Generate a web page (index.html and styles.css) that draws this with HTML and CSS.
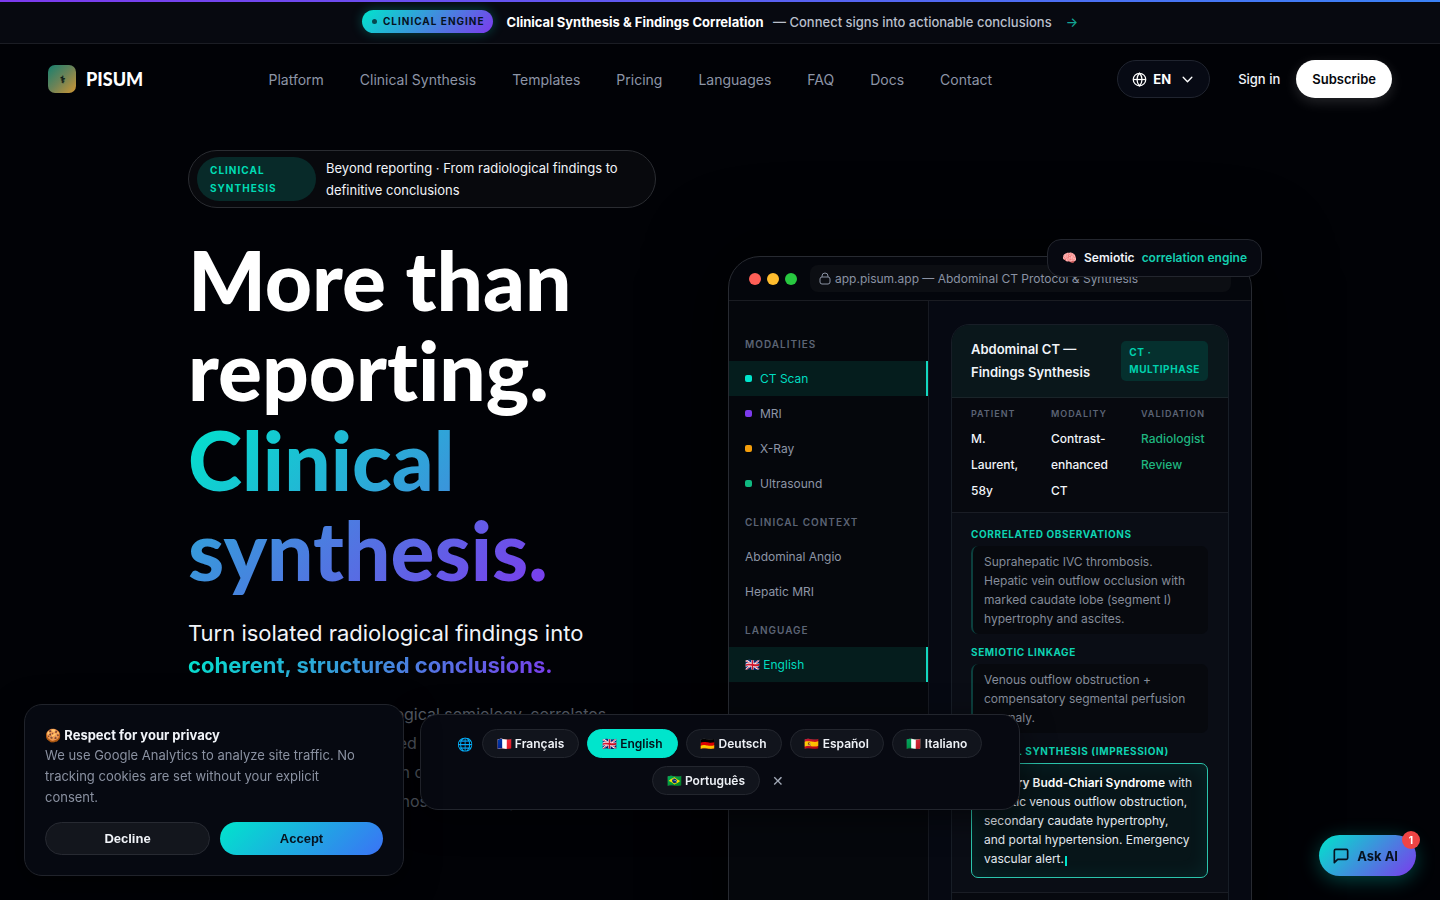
FILE: index.html
```html
<!DOCTYPE html>
<html lang="en">
<head>
  <meta charset="UTF-8" />
  <meta name="viewport" content="width=device-width, initial-scale=1" />
  <title>PISUM - Clinical Synthesis</title>
  <link rel="stylesheet" href="styles.css">
</head>
<body>
  <div class="announce">
    <span class="announce-badge"><span class="announce-dot"></span>CLINICAL ENGINE</span>
    <span class="announce-text"><strong>Clinical Synthesis &amp; Findings Correlation</strong> — Connect signs into actionable conclusions</span>
    <a href="#synthesis" class="announce-arrow">→</a>
  </div>

  <header class="navbar">
    <a href="#" class="brand"><span class="brand-logo">⚕</span>PISUM</a>
    <nav>
      <ul class="nav-links">
        <li><a href="#platform">Platform</a></li>
        <li><a href="#synthesis">Clinical Synthesis</a></li>
        <li><a href="#templates">Templates</a></li>
        <li><a href="#pricing">Pricing</a></li>
        <li><a href="#languages">Languages</a></li>
        <li><a href="#faq">FAQ</a></li>
        <li><a href="#docs">Docs</a></li>
        <li><a href="#contact">Contact</a></li>
      </ul>
    </nav>
    <div class="nav-actions">
      <button type="button" class="lang-btn">
        <svg width="15" height="15" viewBox="0 0 24 24" fill="none" stroke="currentColor" stroke-width="2"><circle cx="12" cy="12" r="10"/><path d="M2 12h20"/><path d="M12 2c3 3 4 6.500 4 10s-1 7-4 10c-3-3-4-6.500-4-10s1-7 4-10z"/></svg>
        EN
        <svg class="chevron" width="13" height="13" viewBox="0 0 24 24" fill="none" stroke="currentColor" stroke-width="2.500" stroke-linecap="round" stroke-linejoin="round"><path d="M4 8l8 8 8-8"/></svg>
      </button>
      <a href="#signin" class="sign-in">Sign in</a>
      <a href="#subscribe" class="subscribe">Subscribe</a>
    </div>
  </header>

  <main class="hero">
    <section class="hero-copy">
      <div class="hero-pill">
        <span class="hero-tag">CLINICAL SYNTHESIS</span>
        <span>Beyond reporting · From radiological findings to definitive conclusions</span>
      </div>
      <h1>More than reporting.<br><span class="gradient-text">Clinical synthesis.</span></h1>
      <p class="hero-sub">Turn isolated radiological findings into<br><strong class="gradient-text">coherent, structured conclusions.</strong></p>
      <p class="hero-desc">PISUM comprehends radiological semiology, correlates<br>each observation to its related signs and builds<br>your structured interpretation of the findings,<br>from first impression to diagnostic certainty.</p>
    </section>

    <section class="hero-visual">
      <div class="float-badge">🧠 <span>Semiotic</span> <em>correlation engine</em></div>
      <div class="window">
        <div class="window-bar">
          <span class="light red"></span>
          <span class="light yellow"></span>
          <span class="light green"></span>
          <div class="url">
            <svg width="12" height="13" viewBox="0 0 12 13" fill="none" stroke="currentColor"><rect x="1" y="5" width="10" height="7" rx="2"/><path d="M3 5V4a3 3 0 0 1 6 0v1"/></svg>
            app.pisum.app — Abdominal CT Protocol &amp; Synthesis
          </div>
        </div>
        <div class="window-body">
          <aside class="sidebar">
            <h4>MODALITIES</h4>
            <ul>
              <li class="active"><i class="dot teal"></i>CT Scan</li>
              <li><i class="dot purple"></i>MRI</li>
              <li><i class="dot orange"></i>X-Ray</li>
              <li><i class="dot emerald"></i>Ultrasound</li>
            </ul>
            <h4>CLINICAL CONTEXT</h4>
            <ul>
              <li>Abdominal Angio</li>
              <li>Hepatic MRI</li>
            </ul>
            <h4>LANGUAGE</h4>
            <ul>
              <li class="active">🇬🇧 English</li>
            </ul>
          </aside>

          <div class="panel">
            <article class="report">
              <div class="report-head">
                <h3>Abdominal CT — Findings Synthesis</h3>
                <span class="report-tag">CT ·<br>MULTIPHASE</span>
              </div>
              <dl class="report-meta">
                <div><dt>PATIENT</dt><dd>M. Laurent, 58y</dd></div>
                <div><dt>MODALITY</dt><dd>Contrast-enhanced CT</dd></div>
                <div><dt>VALIDATION</dt><dd class="ok">Radiologist Review</dd></div>
              </dl>
              <div class="report-body">
                <h5>CORRELATED OBSERVATIONS</h5>
                <p>Suprahepatic IVC thrombosis. Hepatic vein outflow occlusion with marked caudate lobe (segment I) hypertrophy and ascites.</p>
                <h5>SEMIOTIC LINKAGE</h5>
                <p>Venous outflow obstruction + compensatory segmental perfusion anomaly.</p>
                <h5>CLINICAL SYNTHESIS (IMPRESSION)</h5>
                <p class="impression"><strong>Primary Budd-Chiari Syndrome</strong> with hepatic venous outflow obstruction, secondary caudate hypertrophy, and&nbsp;portal hypertension. Emergency vascular alert.<span class="cursor"></span></p>
              </div>
              <div class="report-foot"></div>
            </article>
          </div>
        </div>
      </div>
    </section>
  </main>

  <div class="lang-bar">
    <span class="globe">🌐</span>
    <button type="button">🇫🇷 Français</button>
    <button type="button" class="selected">🇬🇧 English</button>
    <button type="button">🇩🇪 Deutsch</button>
    <button type="button">🇪🇸 Español</button>
    <button type="button">🇮🇹 Italiano</button>
    <button type="button">🇧🇷 Português</button>
    <button type="button" class="close" aria-label="Close">✕</button>
  </div>

  <div class="cookie-box">
    <h2>🍪 Respect for your privacy</h2>
    <p>We use Google Analytics to analyze site traffic. No tracking cookies are set without your explicit consent.</p>
    <div class="cookie-actions">
      <button type="button">Decline</button>
      <button type="button" class="accept">Accept</button>
    </div>
  </div>

  <button type="button" class="ask-ai">
    <svg width="16" height="16" viewBox="0 0 24 24" fill="none" stroke="currentColor" stroke-width="2.500" stroke-linejoin="round"><path d="M22 15a2 2 0 0 1-2 2H7l-5 5V4a2 2 0 0 1 2-2h16a2 2 0 0 1 2 2z"/></svg>
    Ask AI
    <span class="ask-count">1</span>
  </button>
</body>
</html>
```
FILE: styles.css
```css
* {
  box-sizing: border-box;
}
body {
  font-family: Inter, "Noto Color Emoji", sans-serif;
  margin: 0;
  height: 100vh;
  overflow: hidden;
  background: #010206;
  color: #f1f4f9;
}
h1, h2, h3, h4, h5, p, ul, dl, dd {
  margin: 0;
  padding: 0;
}
ul {
  list-style: none;
}
a {
  color: inherit;
  text-decoration: none;
}
button {
  font-family: inherit;
  cursor: pointer;
}

/* announcement */
.announce {
  display: flex;
  align-items: center;
  justify-content: center;
  gap: 14px;
  height: 44px;
  position: relative;
  background: #070910;
  border-bottom: 1px solid #1b1d24;
  font-size: 13px;
  font-weight: 500;
  color: #b9bfcb;
}
.announce::before {
  content: "";
  position: absolute;
  inset: 0 0 auto;
  height: 2px;
  background: linear-gradient(90deg, #7c3aed, #3b82f6);
}
.announce-badge {
  display: flex;
  align-items: center;
  gap: 6px;
  padding: 0 8px 0 10px;
  line-height: 23px;
  border-radius: 12px;
  background: linear-gradient(135deg, #00e5cc, #7c3aed);
  box-shadow: 0 0 12px rgba(0, 229, 204, 0.3);
  color: #06121f;
  font-size: 10px;
  font-weight: 700;
  letter-spacing: 1px;
}
.announce-dot {
  width: 5px;
  height: 5px;
  border-radius: 50%;
  background: #06484f;
}
.announce strong {
  color: #fff;
  margin-right: 6px;
}
.announce-arrow {
  color: #12a594;
}

/* navbar */
.navbar {
  display: flex;
  align-items: center;
  justify-content: space-between;
  padding: 16px 48px;
}
.brand {
  display: flex;
  align-items: center;
  gap: 10px;
  font-family: Lato, sans-serif;
  font-size: 18px;
  font-weight: 900;
  color: #fff;
}
.brand-logo {
  display: grid;
  place-items: center;
  width: 28px;
  height: 28px;
  border-radius: 7px;
  background: linear-gradient(135deg, #16806f, #6d8357 50%, #cf9633);
  color: #0c1a17;
  font-size: 10px;
}
.nav-links {
  display: flex;
  gap: 36px;
  font-size: 14px;
  color: #8d95a6;
}
.nav-actions {
  display: flex;
  align-items: center;
  font-size: 13px;
  font-weight: 600;
}
.lang-btn {
  display: flex;
  align-items: center;
  gap: 6px;
  height: 38px;
  padding: 0 15px 0 14px;
  border: 1px solid #20242f;
  border-radius: 19px;
  background: #070a14;
  color: #fff;
  font-size: 13px;
  font-weight: 700;
}
.chevron {
  margin-left: 4px;
}
.sign-in {
  margin: 0 16px 0 28px;
  font-weight: 500;
}
.subscribe {
  padding: 0 16px;
  line-height: 38px;
  border-radius: 19px;
  background: #fff;
  box-shadow: 0 4px 14px rgba(255, 255, 255, 0.15);
  color: #05070d;
}

/* hero */
.hero {
  display: grid;
  grid-template-columns: 468fr 524fr;
  gap: 72px;
  align-items: start;
  max-width: 1064px;
  margin: 36px auto 0;
}
.hero-pill {
  display: flex;
  align-items: center;
  gap: 10px;
  padding: 6px 8px;
  border: 1px solid #2a2c31;
  border-radius: 29px;
  background: #08090d;
  font-size: 13px;
  line-height: 22px;
}
.hero-tag {
  flex: 0 0 119px;
  padding: 4px 13px;
  border-radius: 22px;
  background: #082a29;
  color: #00dcb4;
  font-size: 10px;
  font-weight: 700;
  line-height: 18px;
  letter-spacing: 1px;
}
h1 {
  margin-top: 26px;
  font-family: Lato, sans-serif;
  font-size: 82px;
  font-weight: 900;
  line-height: 90px;
  font-variant-ligatures: none;
  color: #fff;
}
.gradient-text {
  background: linear-gradient(135deg, #00e5cc, #7c3aed);
  background-clip: text;
  -webkit-background-clip: text;
  color: transparent;
}
.hero-sub {
  margin-top: 23px;
  font-size: 22px;
  line-height: 32px;
}
.hero-sub strong {
  font-weight: 700;
}
.hero-desc {
  margin-top: 19px;
  font-size: 16px;
  line-height: 29px;
  white-space: nowrap;
  color: #5b616d;
}

/* app window */
.hero-visual {
  position: relative;
  margin-top: 106px;
}
.float-badge {
  position: absolute;
  z-index: 2;
  top: -17px;
  right: -10px;
  padding: 0 14px;
  border: 1px solid #23262e;
  border-radius: 14px;
  background: #070911;
  font-size: 12px;
  font-weight: 600;
  line-height: 36px;
  white-space: nowrap;
}
.float-badge span {
  margin: 0 4px;
}
.float-badge em {
  font-style: normal;
  color: #14cfb0;
}
.window {
  border: 1px solid #272a31;
  border-radius: 32px;
  background: #04060c;
  box-shadow: 0 0 80px #000;
  overflow: hidden;
}
.window-bar {
  display: flex;
  align-items: center;
  gap: 6px;
  height: 44px;
  padding: 0 20px;
  border-bottom: 1px solid #1a1c22;
}
.light {
  width: 12px;
  height: 12px;
  border-radius: 50%;
}
.red { background: #ff5f57; }
.yellow { background: #ffbd2e; }
.green { background: #28c840; }
.url {
  flex: 1;
  display: flex;
  align-items: center;
  gap: 4px;
  margin-left: 7px;
  padding: 0 9px;
  height: 27px;
  border-radius: 8px;
  background: #0c0e13;
  color: #8a92a3;
  font-size: 12px;
  white-space: nowrap;
}
.window-body {
  display: flex;
}
.sidebar {
  flex: 0 0 200px;
  padding-top: 22px;
  border-right: 1px solid #171a22;
  background: #05070c;
}
.sidebar h4 {
  margin: 12px 16px 8px;
  font-size: 10px;
  font-weight: 600;
  line-height: 18px;
  letter-spacing: 1px;
  color: #5c6475;
}
.sidebar li {
  display: flex;
  align-items: center;
  height: 35px;
  padding: 0 16px;
  font-size: 12px;
  color: #8d95a6;
}
.sidebar li.active {
  border-right: 2px solid #14d8c0;
  background: #051d1d;
  color: #00dcc0;
}
.dot {
  width: 7px;
  height: 7px;
  margin-right: 8px;
  border-radius: 2px;
}
.teal { background: #00e5cc; }
.purple { background: #7c3aed; }
.orange { background: #f59e0b; }
.emerald { background: #10b981; }

/* report card */
.panel {
  flex: 1;
  padding: 23px 22px;
  background: #060912;
}
.report {
  border: 1px solid #181e27;
  border-radius: 18px;
  background: #0a0d15;
  overflow: hidden;
}
.report-head {
  display: flex;
  align-items: center;
  justify-content: space-between;
  gap: 16px;
  height: 73px;
  padding: 0 20px 0 19px;
  border-bottom: 1px solid #1a2429;
  background: #0a171b;
}
.report-head h3 {
  font-size: 13px;
  font-weight: 600;
  line-height: 23px;
}
.report-tag {
  padding: 3px 8px;
  border-radius: 5px;
  background: #05302e;
  color: #00d0ad;
  font-size: 10px;
  font-weight: 700;
  line-height: 17px;
  letter-spacing: 0.06em;
}
.report-meta {
  display: grid;
  grid-template-columns: 48px 58px 1fr;
  gap: 32px;
  padding: 8px 19px;
  border-bottom: 1px solid #1a1d25;
  background: #07090f;
}
.report-meta dt {
  margin-bottom: 4px;
  font-size: 9px;
  font-weight: 600;
  line-height: 16px;
  letter-spacing: 1px;
  color: #5c6475;
}
.report-meta dd {
  font-size: 12px;
  font-weight: 500;
  line-height: 26px;
}
.report-meta .ok {
  color: #1fb57f;
}
.report-body {
  padding: 14px 20px 14px 19px;
}
.report-body h5 {
  margin-bottom: 5px;
  font-size: 10px;
  font-weight: 700;
  line-height: 14px;
  letter-spacing: 0.06em;
  color: #0ed3b2;
}
.report-body p {
  margin-bottom: 11px;
  padding: 6px 11px;
  border-left: 2px solid #0c3f3d;
  border-radius: 7px;
  background: #07090e;
  font-size: 12px;
  line-height: 19px;
  color: #858c9a;
}
.report-body .impression {
  margin-bottom: 0;
  padding: 9px 8px 9px 12px;
  border: 1px solid #2bc4ac;
  background: #071519;
  box-shadow: inset 0 0 20px rgba(0, 229, 204, 0.08);
  color: #e3e8ef;
}
.impression strong {
  font-weight: 600;
  color: #fff;
}
.cursor {
  display: inline-block;
  width: 2px;
  height: 10px;
  margin-left: 1px;
  background: #00e5cc;
  vertical-align: -3px;
}
.report-foot {
  height: 48px;
  border-top: 1px solid #1a1d25;
  background: #07090f;
}

/* language suggestion */
.lang-bar {
  position: fixed;
  z-index: 10;
  left: 50%;
  bottom: 90px;
  transform: translateX(-50%);
  display: flex;
  flex-wrap: wrap;
  align-items: center;
  justify-content: center;
  gap: 8px;
  width: 600px;
  max-width: 100%;
  padding: 14px 20px;
  border: 1px solid #22252d;
  border-radius: 18px;
  background: #070911;
  box-shadow: 0 8px 32px rgba(0, 0, 0, 0.5);
}
.globe {
  font-size: 13px;
}
.lang-bar button {
  height: 29px;
  padding: 0 14px;
  border: 1px solid #23262e;
  border-radius: 15px;
  background: #11141c;
  color: #eef1f6;
  font-size: 12px;
  font-weight: 600;
}
.lang-bar .selected {
  border-color: #00e5cc;
  background: #00e5cc;
  color: #04121a;
}
.lang-bar .close {
  padding: 0 4px;
  border: 0;
  background: none;
  color: #a3aab8;
  font-size: 14px;
  font-weight: 400;
}

/* cookies */
.cookie-box {
  position: fixed;
  z-index: 11;
  left: 24px;
  bottom: 24px;
  width: 380px;
  padding: 20px;
  border: 1px solid #20232b;
  border-radius: 18px;
  background: #060911;
  box-shadow: 0 8px 32px rgba(0, 0, 0, 0.6);
}
.cookie-box h2 {
  font-size: 13px;
  font-weight: 700;
  line-height: 20px;
}
.cookie-box p {
  padding-right: 16px;
  font-size: 13px;
  line-height: 21px;
  color: #8a91a1;
}
.cookie-actions {
  display: flex;
  gap: 10px;
  margin-top: 14px;
}
.cookie-actions button {
  flex: 1;
  height: 33px;
  border: 1px solid #272a32;
  border-radius: 17px;
  background: #13161d;
  color: #f1f4f9;
  font: bold 13px "Liberation Sans", Arial, sans-serif;
}
.cookie-actions .accept {
  border: 0;
  background: linear-gradient(135deg, #00e5cc, #3b72f6);
  color: #06121f;
}

/* chat button */
.ask-ai {
  position: fixed;
  z-index: 12;
  right: 24px;
  bottom: 24px;
  display: flex;
  align-items: center;
  gap: 8px;
  height: 41px;
  padding: 0 18px 0 14px;
  border: 0;
  border-radius: 21px;
  background: linear-gradient(135deg, #00e5cc, #7c3aed);
  box-shadow: 0 4px 20px rgba(0, 229, 204, 0.3);
  color: #06121f;
  font-size: 13px;
  font-weight: 700;
}
.ask-count {
  position: absolute;
  top: -4px;
  right: -4px;
  width: 18px;
  border-radius: 50%;
  background: #ef4444;
  color: #fff;
  font-size: 10px;
  line-height: 18px;
}
```
